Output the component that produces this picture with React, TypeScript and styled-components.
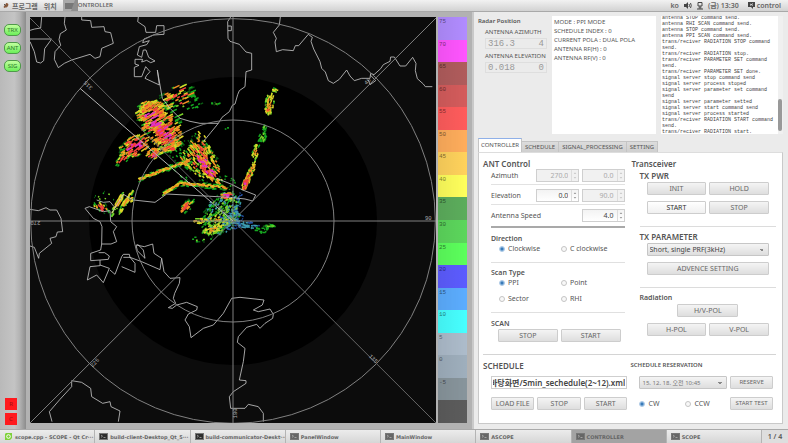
import React, { useEffect, useRef, useState } from "react";
import styled, { createGlobalStyle, css } from "styled-components";

const sans = `"Noto Sans", "Noto Sans CJK KR", sans-serif`;
const mono = `"Liberation Mono", "Noto Sans CJK KR", monospace`;

const GlobalStyle = createGlobalStyle`
  *, *::before, *::after { box-sizing: border-box; }
  body { margin: 0; background: #ebebeb; }
  body, button, input, select { font-family: ${sans}; font-size: 7px; color: #555; }
  p, h2, h3, dl, dd, fieldset { margin: 0; padding: 0; border: 0; }
`;

/* ---------- shell ---------- */

const Desktop = styled.div`
  min-height: 100vh;
  display: flex;
  flex-direction: column;
`;

const TopBar = styled.header`
  height: 12px;
  display: flex;
  align-items: center;
  gap: 6px;
  padding: 0 7px 0 3px;
  background: linear-gradient(#f2f2f2, #d2d2d2);
  border-bottom: 1px solid #a9a9a9;
  font-size: 7px;
  line-height: 11px;
  font-weight: 600;
  color: #666;
  white-space: nowrap;
`;

const MenuEntry = styled.button`
  display: flex;
  align-items: center;
  gap: 3px;
  padding: 0;
  border: 0;
  background: none;
  font-weight: 600;
  color: #666;
`;

const ActiveWindow = styled.div`
  display: flex;
  align-items: center;
  height: 11px;
  font-size: 6px;
  svg { background: #aaa; }
`;

const Tray = styled.div`
  margin-left: auto;
  display: flex;
  align-items: center;
  gap: 5px;
`;

const TrayUser = styled.span`
  display: flex;
  align-items: center;
  gap: 2px;
  margin-left: 4px;
`;

const Workspace = styled.main`
  flex: 1;
  display: grid;
  grid-template-columns: minmax(0, 472fr) minmax(0, 316fr);
`;

/* ---------- scope ---------- */

const Scope = styled.section`
  display: grid;
  grid-template-columns: 26px minmax(0, 1fr);
  background: #b2b2b2;
`;

const StatusStrip = styled.div`
  display: flex;
  flex-direction: column;
  align-items: flex-start;
  gap: 6px;
  padding: 12px 4px 4px;
  background: linear-gradient(90deg, #b9b9b9, #c4c4c4 55%, #b4b4b4 75%, #8c8c8c);
`;

const Pill = styled.button`
  width: 17px;
  height: 12px;
  padding: 0;
  border: 1px solid #4f9a4a;
  border-radius: 5px;
  background: linear-gradient(#c2ff9f, #6cf05a);
  font-size: 6px;
  line-height: 9px;
  color: #2f7a2d;
`;

const Alarms = styled.div`
  margin-top: auto;
  display: grid;
  gap: 3px;
  padding-left: 1px;
`;

const Alarm = styled.button`
  width: 12px;
  height: 12px;
  padding: 0;
  border: 0;
  background: #ff1a1e;
  font-size: 6px;
  line-height: 12px;
  color: #a01010;
`;

const ScopeView = styled.div`
  display: grid;
  grid-template-columns: minmax(0, 1fr) 29px;
  gap: 2px;
  align-items: start;
  padding: 5px 5px 6px 4px;
`;

const RadarScreen = styled.svg`
  display: block;
  width: 100%;
  background: #0c0c0c;
`;

const Scale = styled.ol`
  align-self: stretch;
  margin: 0;
  padding: 0;
  list-style: none;
  display: grid;
  grid-auto-rows: 1fr;
`;

const ScaleStep = styled.li<{ $color: string }>`
  background: linear-gradient(90deg, #0001, #fff0), ${(p) => p.$color};
  padding-left: 1px;
  font-family: ${mono};
  font-size: 6px;
  line-height: 9px;
  color: #0008;
`;

const scaleSteps: [string, string][] = [
  ["75", "#b18cff"], ["70", "#ff55ff"], ["65", "#b05c5c"], ["60", "#d45c5c"],
  ["55", "#ff5c5c"], ["50", "#ffad5c"], ["45", "#ffd25c"], ["40", "#ffff5c"],
  ["35", "#5cad5c"], ["30", "#5cd65c"], ["25", "#5cff5c"], ["20", "#5c5cff"],
  ["15", "#5cadff"], ["10", "#47ffff"], ["5", "#adbccb"], ["0", "#9fafbd"],
  ["-5", "#88959c"], ["", "#5c5c5c"],
];

/* ---------- radar echoes ---------- */

type Tone = "dark" | "green" | "blue" | "teal" | "lime" | "yellow" | "orange" | "red" | "magenta";
const toneColor: Record<Tone, string> = {
  dark: "#0a5a12", green: "#16a820", blue: "#2450a0", teal: "#3c9cb0", lime: "#7ad22a",
  yellow: "#dcd428", orange: "#f28e22", red: "#f4403c", magenta: "#e030c8",
};
const storm: Tone[] = ["dark", "green", "lime", "yellow", "orange", "yellow", "orange", "red", "red", "magenta"];
const hot: Tone[] = ["dark", "green", "yellow", "orange", "red", "red", "magenta"];
const line: Tone[] = ["green", "lime", "yellow", "yellow", "orange"];
const weak: Tone[] = ["dark", "green", "green", "lime"];
const warm: Tone[] = ["dark", "green", "yellow", "orange", "red"];
const core: Tone[] = ["dark", "green", "teal", "green", "lime", "teal", "lime"];
const cold: Tone[] = ["blue", "blue", "teal", "teal"];

/* x, y, half length, half width, axis angle, count, streak angle, streak length, ramp */
type Cell = [number, number, number, number, number, number, number, number, Tone[]];
const cells: Cell[] = [
  [455, 345, 48, 40, 50, 140, -30, 15, storm],
  [480, 375, 84, 54, 55, 230, -30, 15, storm],
  [505, 412, 50, 28, 60, 90, -30, 15, hot],
  [532, 292, 54, 38, -20, 48, -25, 20, warm],
  [550, 325, 62, 50, 0, 34, -25, 14, weak],
  [403, 440, 48, 30, -25, 120, -35, 13, hot],
  [372, 474, 32, 16, -50, 30, -50, 14, warm],
  [460, 460, 20, 16, 0, 36, -30, 12, hot],
  [497, 447, 48, 12, -18, 44, -20, 15, line],
  [602, 450, 54, 32, 80, 90, 55, 11, warm],
  [600, 485, 64, 44, 30, 140, 45, 11, storm],
  [628, 510, 52, 20, 45, 80, 45, 11, hot],
  [585, 485, 80, 62, 30, 90, 45, 8, weak],
  [560, 620, 28, 14, -50, 40, -45, 12, warm],
  [668, 640, 66, 50, -60, 240, -50, 8, core],
  [650, 660, 60, 46, -40, 60, -40, 9, weak],
  [655, 668, 34, 28, -40, 40, -40, 9, line],
  [694, 655, 36, 34, 0, 100, 30, 7, cold],
  [635, 690, 28, 14, -20, 45, -20, 9, line],
  [682, 588, 18, 12, 0, 34, 0, 11, hot],
  [600, 662, 26, 9, 0, 28, 0, 8, line],
  [612, 712, 40, 16, -20, 16, 0, 7, weak],
  [738, 673, 50, 11, 12, 60, 10, 8, cold],
  [785, 690, 20, 12, 0, 16, 0, 9, weak],
  [808, 678, 18, 6, 0, 16, 0, 9, weak],
  [822, 270, 10, 6, 0, 10, 20, 9, line],
  [808, 312, 34, 14, 95, 60, -75, 9, line],
  [804, 330, 11, 9, 90, 18, 0, 8, warm],
  [794, 385, 10, 6, 90, 12, -60, 8, weak],
  [788, 412, 18, 11, 110, 26, -60, 9, weak],
  [768, 455, 26, 11, 100, 30, -60, 9, line],
  [758, 505, 26, 8, 105, 24, -60, 8, line],
  [746, 530, 34, 9, 110, 46, -70, 9, warm],
  [736, 552, 20, 8, 110, 34, -70, 9, hot],
  [714, 612, 40, 8, 105, 22, -70, 7, cold],
  [690, 560, 48, 18, 80, 20, 80, 5, weak],
  [353, 612, 42, 7, -62, 55, -60, 10, line],
  [378, 606, 42, 7, -58, 55, -58, 10, line],
  [390, 598, 12, 8, 0, 14, 0, 8, warm],
  [306, 624, 26, 14, 20, 28, 60, 10, warm],
  [318, 592, 40, 18, 0, 12, 20, 5, weak],
  [648, 311, 16, 4, 0, 10, 0, 6, weak],
  [680, 385, 6, 3, 0, 4, 0, 5, weak],
];

const seeded = (seed: number) => () => {
  seed = (seed * 1664525 + 1013904223) % 4294967296;
  return seed / 4294967296;
};

function buildEchoes() {
  const rand = seeded(77);
  const paths = {} as Record<Tone, string>;
  const put = (tone: Tone, x: number, y: number, dx: number, dy: number) => {
    paths[tone] = (paths[tone] ?? "") +
      `M${(x - dx).toFixed(1)} ${(y - dy).toFixed(1)}l${(2 * dx).toFixed(1)} ${(2 * dy).toFixed(1)}`;
  };
  for (const [cx, cy, rl, rw, axis, count, dir, len, ramp] of cells) {
    const a = (axis * Math.PI) / 180;
    const d = (dir * Math.PI) / 180;
    for (let i = 0; i < count; i++) {
      const r = Math.pow(rand(), 0.5);
      const t = rand() * Math.PI * 2;
      const u = Math.cos(t) * r * rl;
      const v = Math.sin(t) * r * rw;
      const heat = Math.min(0.999, Math.max(0, 0.98 - r * 0.75 + (rand() - 0.5) * 0.6));
      const half = (len * (0.4 + rand() * 0.8)) / 2;
      put(ramp[Math.floor(heat * ramp.length)],
        cx + u * Math.cos(a) - v * Math.sin(a),
        cy + u * Math.sin(a) + v * Math.cos(a),
        Math.cos(d) * half, Math.sin(d) * half);
    }
  }
  const bands: [number, number, number, number][] = [
    [418, 538, 500, 506], [500, 506, 575, 480],
    [490, 582, 540, 550], [540, 550, 590, 553], [590, 553, 680, 564],
  ];
  for (const [x1, y1, x2, y2] of bands) {
    const length = Math.hypot(x2 - x1, y2 - y1);
    const n = Math.round(length * 0.7);
    for (let i = 0; i < n; i++) {
      const k = i / n;
      const off = (rand() + rand() - 1) * 9;
      const tone = Math.abs(off) > 4 ? "green" : (["yellow", "lime", "yellow", "orange"] as Tone[])[Math.floor(rand() * 4)];
      put(tone, x1 + (x2 - x1) * k, y1 + (y2 - y1) * k + off, ((x2 - x1) / length) * 4, ((y2 - y1) / length) * 4);
    }
  }
  return paths;
}
const echoes = buildEchoes();
const toneOrder = Object.keys(toneColor) as Tone[];

function Radar() {
  return (
    <RadarScreen viewBox="90 51 1218 1218" role="img" aria-label="PPI radar display">
      <circle cx="699" cy="663" r="432" fill="#000" />
      <g fill="none" strokeWidth="4.5">
        {toneOrder.map((tone) => (
          <path key={tone} d={echoes[tone]} stroke={toneColor[tone]} />
        ))}
      </g>
      <g fill="none" stroke="#c4c4c4" strokeWidth="2.5" strokeLinejoin="round">
        <path d="M125 51L122 84L104 87L90 91M90 117H155L134 146L131 182L122 189L110 186L103 155L90 125" />
        <path d="M195 51L193 70L199 90L181 101L177 119L182 136L165 155L163 178L175 203L193 190L215 180L270 163L285 175L300 170L305 145L340 130L332 98L315 95L312 80L275 82L272 62L245 60V51" />
        <path d="M415 51L413 65L435 80L438 97H467L470 77H492V103L460 105L432 117L428 128L448 122L440 134L418 140L412 165L425 172L430 150L438 150L446 172L465 183L452 188L440 181L425 186L428 178H405V192L417 196L403 202V230H425L437 200L450 215L440 226L435 235L478 255L472 210L487 295L510 325L540 355L570 364L600 370L655 370L632 398L610 425M655 370L666 352L688 335L697 316L705 312L713 284L718 272L735 260L738 215L755 210V160L738 156L718 133L690 124L684 115L683 65L692 51M684 78h10v14h-10" />
        <path d="M841 51L838 75L820 97L829 115L825 126L829 155L848 149L880 152L886 137L896 137L925 103L937 112L933 124L941 147L960 185L965 205L976 216L985 242L1000 250L1018 238L1040 210L1050 228L1063 242L1085 235L1110 235L1112 220L1122 224L1142 206L1150 194L1170 184L1172 171H1183L1200 198H1217L1238 172L1248 190L1246 212L1252 236L1270 252L1276 260H1297M1105 240L1110 254L1127 242L1112 226" />
        <path d="M90 628L115 632L138 623L150 630L170 630L183 655L188 695L172 696L168 710L150 715L155 730L118 760L116 775L103 742L90 738" />
        <path d="M255 625L268 620L285 626L310 635L330 632L332 665L350 680L340 695L350 725L333 732L305 732L306 680L300 665L280 655L255 625M305 732L302 750L272 760V782L300 780L325 778L328 768L314 758L296 758M300 780V797L270 800L262 840L290 825L310 848L328 805L300 795M330 810L345 823L365 770L370 763H388L390 772H370M365 800L405 817V790L390 772L425 785L480 809L485 775L462 760L458 732L433 740L408 735L412 752L435 775L430 750L412 732M485 775L492 815L510 835L540 833L538 850L524 880L520 895L527 910L505 923L517 925L530 915L560 907L592 920L590 930L565 942L555 960L568 980L573 1013L610 985L640 975L670 940L695 895L720 892L792 900L787 915L760 930L775 935L810 927L820 943L818 955L795 970L780 985L770 973L740 982L715 1010L712 1027L735 1045L730 1085L718 1140L738 1142V1150L700 1175L688 1190L692 1225H735L745 1213L775 1220L790 1240V1265" />
        <path d="M290 600L310 607L330 605L342 620M335 640L370 583L400 600L465 607L500 582L690 592L735 597L758 603L767 585L728 570L695 553L650 535" />
        <path d="M156 1265L148 1235L180 1198L215 1160V1142L245 1147L272 1165L275 1190L308 1210L330 1205L333 1220L360 1233L355 1265" />
      </g>
      <g fill="none" stroke="#808080" strokeWidth="3">
        <circle cx="699" cy="663" r="607" />
        <circle cx="699" cy="663" r="303" />
        <path d="M699 51V1269M90 663H1308M90 1269L1308 54" />
        <path d="M90 54L1308 1269" stroke="#666" />
      </g>
      <path d="M240 265L699 663" stroke="#b4b4b4" strokeWidth="3" />
      <g fill="#aaa" fontFamily="Liberation Mono, monospace" fontSize="17" textAnchor="middle">
        <text x="1285" y="660">90</text>
        <text transform="translate(106 664) rotate(180)">270</text>
        <text transform="translate(268 252) rotate(-135)">315</text>
        <text transform="translate(1106 248) rotate(-45)">45</text>
        <text transform="translate(1116 1080) rotate(45)">135</text>
        <text transform="translate(288 1092) rotate(-45)">225</text>
        <text transform="translate(712 1240) rotate(-90)">180</text>
      </g>
    </RadarScreen>
  );
}

/* ---------- control window ---------- */

const Panel = styled.section`
  display: flex;
  flex-direction: column;
  padding: 4px 5px 5px 4px;
  background: #ebebeb;
  border-left: 2px solid #c9c9c9;
  min-width: 0;
`;

const Overview = styled.div`
  display: grid;
  grid-template-columns: minmax(0, 69fr) minmax(0, 104fr) minmax(0, 122fr);
  gap: 5px;
  height: 118px;
`;

const Position = styled.div`
  display: flex;
  flex-direction: column;
  line-height: 10px;
`;

const Readout = styled.div`
  padding-left: 7px;
  margin-bottom: 2px;
  font-size: 6px;
  white-space: nowrap;
  line-height: 11px;
`;

const Lcd = styled.output`
  display: flex;
  justify-content: space-between;
  height: 11px;
  padding: 0 2px;
  border: 1px solid #dedede;
  font-family: ${mono};
  font-size: 9px;
  line-height: 10px;
  color: #999;
`;

const StatusBox = styled.div`
  padding: 2px;
  background: #fff;
  font-size: 6px;
  line-height: 9px;
  white-space: nowrap;
  overflow: hidden;
`;

const LogBox = styled.div`
  display: grid;
  grid-template-columns: minmax(0, 1fr) 5px;
  background: #fff;
  overflow: hidden;
`;

const LogText = styled.div`
  display: flex;
  flex-direction: column;
  justify-content: center;
  height: 118px;
  padding-left: 1px;
  font-family: ${mono};
  font-size: 5px;
  line-height: 6px;
  color: #444;
`;

const ScrollTrack = styled.div`
  display: flex;
  flex-direction: column;
  justify-content: flex-end;
  padding: 0 1px 3px 0;
  background: #f0f0f0;
  &::after { content: ""; height: 32px; border-radius: 2px; background: #999; }
`;

const Tabs = styled.div`
  display: flex;
  align-items: flex-end;
  height: 15px;
  margin-top: 3px;
`;

const Tab = styled.button<{ $active: boolean }>`
  height: 11px;
  padding: 0 3px;
  border: 1px solid #c4c4c4;
  border-left-width: 0;
  border-bottom: 0;
  background: linear-gradient(#dcdcdc, #cfcfcf);
  font-size: 6px;
  line-height: 10px;
  white-space: nowrap;
  ${(p) => p.$active && css`
    height: 14px;
    padding: 0 2px;
    border-left-width: 1px;
    border-top: 1px solid #8fb0e8;
    background: #fff;
    line-height: 13px;
  `}
`;

const TabPage = styled.div`
  flex: 1;
  padding: 5px 6px 10px 4px;
  background: #fff;
  border: 1px solid #c9c9c9;
  border-top-color: #ddd;
`;

const Columns = styled.div`
  display: grid;
  grid-template-columns: minmax(0, 1fr) minmax(0, 1fr);
  gap: 4px;
`;

const LowerColumns = styled(Columns)`
  gap: 0;
  grid-template-columns: minmax(0, 148fr) minmax(0, 146fr);
`;

const LowerBlock = styled.section`
  border-top: 1px solid #d4d4d4;
  padding-top: 5px;
`;

const Title = styled.h2<{ $small?: boolean; $medium?: boolean }>`
  height: 11px;
  font-size: ${(p) => (p.$small ? 6 : p.$medium ? 7 : 8)}px;
  line-height: 11px;
  font-weight: 600;
  color: #555;
  white-space: nowrap;
`;

const Indent = styled.div`
  padding: 0 3px 0 8px;
`;

const Block = styled.section<{ $ruled?: boolean }>`
  padding-top: ${(p) => (p.$ruled ? 4 : 1)}px;
  padding-bottom: 12px;
  ${(p) => p.$ruled && css`border-top: 1px solid #dcdcdc;`}
`;

const ScanBlock = styled(Block)`
  padding-top: 5px;
`;

const Fields = styled.div`
  padding-bottom: 1px;
`;

const Field = styled.div`
  display: grid;
  grid-template-columns: minmax(0, 42fr) minmax(0, 43fr) minmax(0, 42fr);
  gap: 3px;
  padding-bottom: 2px;
  margin-bottom: 4px;
  border-bottom: 1px solid #e2e2e2;
  line-height: 13px;
  white-space: nowrap;
  &:last-child { margin-bottom: 0; padding-bottom: 4px; border-bottom: 2px solid #a9a9a9; }
`;

const SpinFrame = styled.span<{ $off?: boolean }>`
  display: flex;
  align-items: center;
  height: 13px;
  border: 1px solid #cfcfcf;
  background: ${(p) => (p.$off ? "#f1f1f1" : "linear-gradient(#f3f3f3, #fff)")};
  &:last-child { grid-column: 3; }
  svg { flex: none; border-left: 1px solid #ddd; }
`;

const SpinInput = styled.input`
  flex: 1;
  min-width: 0;
  width: 0;
  height: 11px;
  padding: 0 3px 0 0;
  border: 0;
  background: none;
  text-align: right;
  color: #444;
  appearance: textfield;
  &::-webkit-inner-spin-button { appearance: none; margin: 0; }
  &:disabled { color: #aaa; }
`;

function Spin({ label, value, disabled }: { label: string; value: string; disabled?: boolean }) {
  return (
    <SpinFrame $off={disabled}>
      <SpinInput type="number" step="0.1" aria-label={label} defaultValue={value} disabled={disabled} />
      <svg width="7" height="11" viewBox="0 0 7 11" fill={disabled ? "#bbb" : "#777"} aria-hidden="true">
        <path d="M2 3.5L3.5 2L5 3.5ZM2 7.5L3.5 9L5 7.5Z" />
      </svg>
    </SpinFrame>
  );
}

const Group = styled.fieldset`
  padding-top: 4px;
  padding-bottom: 8px;
  border-bottom: 1px solid #e0e0e0;
`;

const Choices = styled.div<{ $compact?: boolean }>`
  display: grid;
  grid-template-columns: ${(p) => (p.$compact ? "46px 1fr" : "62px 1fr")};
  row-gap: 6px;
  padding-left: ${(p) => (p.$compact ? 0 : 8)}px;
`;

const Choice = styled.label`
  display: flex;
  align-items: center;
  gap: 3px;
  height: 10px;
  line-height: 10px;
  white-space: nowrap;
`;

const Radio = styled.input`
  appearance: none;
  flex: none;
  width: 6px;
  height: 6px;
  margin: 0;
  border: 1px solid #c4c4c4;
  border-radius: 50%;
  background: #f8f8f8;
  &:checked { border-color: #a8c6e4; background: radial-gradient(#3a7ab8 25%, #8ab8e2 75%); }
`;

function RadioSet({ name, options, compact }: { name: string; options: string[]; compact?: boolean }) {
  const [picked, setPicked] = useState(options[0]);
  return (
    <Choices $compact={compact}>
      {options.map((option) => (
        <Choice key={option}>
          <Radio type="radio" name={name} checked={picked === option} onChange={() => setPicked(option)} />
          {option}
        </Choice>
      ))}
    </Choices>
  );
}

const PushButton = styled.button<{ $default?: boolean }>`
  width: 100%;
  height: 13px;
  padding: 0;
  border: 1px solid #cdcdcd;
  border-radius: 1px;
  background: ${(p) => (p.$default ? "linear-gradient(#fff, #f0f0f0)" : "linear-gradient(#f4f4f4, #dedede)")};
  color: ${(p) => (p.$default ? "#333" : "#666")};
  line-height: 11px;
  white-space: nowrap;
`;

const SmallButton = styled(PushButton)`
  font-size: 6px;
`;

const ButtonGrid = styled.div<{ $columns: number }>`
  display: grid;
  grid-template-columns: repeat(${(p) => p.$columns}, minmax(0, 1fr));
  gap: 6px 3px;
`;

const ScanButtons = styled.div`
  padding: 0 4px 0 7px;
`;

const TxArea = styled.div`
  padding: 0 7px 0 7px;
  margin-top: 1px;
`;

const TxGroup = styled.div`
  padding-left: 8px;
`;

const WideButton = styled.div`
  grid-column: 1 / -1;
  justify-self: center;
  width: 50%;
`;

const PulseSelect = styled.select`
  grid-column: 1 / -1;
  height: 13px;
  padding: 0 12px 0 2px;
  border: 1px solid #c6c6c6;
  border-radius: 1px;
  appearance: none;
  background:
    linear-gradient(45deg, #0000 50%, #888 50%) right 6px center / 2px 2px no-repeat,
    linear-gradient(-45deg, #0000 50%, #888 50%) right 4px center / 2px 2px no-repeat,
    linear-gradient(#f4f4f4, #dedede);
  color: #444;
`;

const DateSelect = styled(PulseSelect)`
  grid-column: auto;
  width: 100%;
  min-width: 0;
  font-size: 6px;
  color: #777;
`;

const FullRow = styled.div`
  grid-column: 1 / -1;
`;

const PathInput = styled.input`
  display: block;
  width: 100%;
  height: 13px;
  margin: 5px 0 8px;
  padding: 0 1px;
  border: 1px solid #cfcfcf;
  background: #fff;
  font-weight: 600;
  font-size: 8px;
  color: #444;
`;

function SchedulePath() {
  const field = useRef<HTMLInputElement>(null);
  useEffect(() => {
    if (field.current) field.current.scrollLeft = field.current.scrollWidth;
  }, []);
  return <PathInput ref={field} aria-label="Schedule file" defaultValue="바탕화면/5min_sechedule(2~12).xml" />;
}

const Reservation = styled.div`
  display: grid;
  grid-template-columns: minmax(0, 88fr) minmax(0, 43fr);
  gap: 8px 3px;
  align-items: center;
  padding: 5px 3px 0 9px;
`;

/* ---------- taskbar ---------- */

const Taskbar = styled.footer`
  display: grid;
  grid-template-columns: repeat(8, minmax(0, 1fr)) 26px;
  height: 14px;
  background: #dedede;
  border-top: 1px solid #aaa;
`;

const Task = styled.button<{ $active?: boolean }>`
  display: flex;
  align-items: center;
  gap: 2px;
  padding: 0 3px 0 4px;
  border: 0;
  border-right: 1px solid #b4b4b4;
  background: ${(p) => (p.$active ? "#a3a3a3" : "linear-gradient(#ececec, #d6d6d6)")};
  font-family: "DejaVu Sans", "Noto Sans CJK KR", sans-serif;
  font-size: 5px;
  font-weight: 600;
  color: #666;
  white-space: nowrap;
  overflow: hidden;
  svg { flex: none; }
`;

const Pager = styled.span`
  font-size: 7px;
  line-height: 13px;
  text-align: center;
  font-weight: 600;
`;

function WindowIcon({ kind }: { kind: string }) {
  if (kind === "qt")
    return (
      <svg width="9" height="9" viewBox="0 0 9 9" aria-hidden="true">
        <path d="M2 1H8V6L6 8H1V2Z" fill="#7fd13b" />
        <circle cx="4.5" cy="4.5" r="1.8" fill="none" stroke="#fff" />
      </svg>
    );
  return (
    <svg width="9" height="7" viewBox="0 0 9 7" aria-hidden="true">
      <rect x="0.5" y="0.5" width="8" height="6" fill={kind === "term" ? "#2d2d2d" : "#666"} stroke="#777" />
      <path d="M2 2L3.5 3.2L2 4.4M4.5 4.5H6.5" fill="none" stroke="#bbb" strokeWidth="0.7" />
    </svg>
  );
}

const tasks: [string, string][] = [
  ["qt", "scope.cpp - SCOPE - Qt Cr···"], ["term", "build-client-Desktop_Qt_5···"],
  ["term", "build-communicator-Deskt···"], ["app", "PanelWindow"], ["app", "MainWindow"],
  ["app", "ASCOPE"], ["app", "CONTROLLER"], ["app", "SCOPE"],
];

const log = [
  "antenna STOP command send.", "antenna RHI SCAN command send.", "antenna STOP command send.",
  "antenna PPI SCAN command send.", "trans/reciver RADIATION STOP command send.",
  "trans/reciver RADIATION stop.", "trans/reciver PARAMETER SET command send.",
  "trans/reciver PARAMETER SET done.", "signal server stop command send",
  "signal server process stoped", "signal server parameter set command send",
  "signal server parameter setted", "signal server start command send",
  "signal server process started", "trans/reciver RADIATION START command send.",
  "trans/reciver RADIATION start.",
];

const tabNames = ["CONTROLLER", "SCHEDULE", "SIGNAL_PROCESSING", "SETTING"];

export default function App() {
  return (
    <Desktop>
      <GlobalStyle />
      <TopBar>
        <MenuEntry>
          <svg width="6" height="7" viewBox="0 0 6 7" aria-hidden="true">
            <path d="M1 6C0 3 3 3 3 1C5 1 6 2 5 4C4 6 3 5 1 6Z" fill="#8a5a3c" />
            <path d="M1 2L3 4" stroke="#555" />
          </svg>
          프로그램
        </MenuEntry>
        <MenuEntry>위치</MenuEntry>
        <ActiveWindow>
          <svg width="15" height="11" viewBox="0 0 15 11" aria-hidden="true">
            <rect x="2" y="3" width="9" height="6" fill="#777" />
            <path d="M8 11L12 0H15V11Z" fill="#8e8e8e" />
          </svg>
          ONTROLLER
        </ActiveWindow>
        <Tray>
          <span>ko</span>
          <svg width="8" height="7" viewBox="0 0 8 7" aria-label="Volume">
            <path d="M0 2H2L4 0V7L2 5H0Z" fill="#444" />
            <path d="M5 2Q6 3.5 5 5M6.5 1Q8 3.5 6.5 6" fill="none" stroke="#444" />
          </svg>
          <svg width="6" height="8" viewBox="0 0 6 8" aria-label="Network">
            <path d="M1 0.5H5V4H1ZM3 4V6M0 7H6M1.5 6H4.5" fill="none" stroke="#444" />
          </svg>
          <span>(금) 13:30</span>
          <TrayUser>
            <svg width="7" height="7" viewBox="0 0 7 7" aria-hidden="true">
              <path d="M0 0H7V5H5V7L3 5H0Z" fill="#444" />
              <path d="M2 2L5 3.5M5 1.5L2 3.5" stroke="#ddd" strokeWidth="0.8" />
            </svg>
            control
          </TrayUser>
        </Tray>
      </TopBar>

      <Workspace>
        <Scope>
          <StatusStrip>
            <Pill>TRX</Pill>
            <Pill>ANT</Pill>
            <Pill>SIG</Pill>
            <Alarms>
              <Alarm>R</Alarm>
              <Alarm>C</Alarm>
            </Alarms>
          </StatusStrip>
          <ScopeView>
            <Radar />
            <Scale>
              {scaleSteps.map(([text, color]) => (
                <ScaleStep key={color} $color={color}>{text}</ScaleStep>
              ))}
            </Scale>
          </ScopeView>
        </Scope>

        <Panel>
          <Overview>
            <Position>
              <Title $small>Radar Position</Title>
              <Readout>ANTENNA AZIMUTH<Lcd><span>316.3</span><span>4</span></Lcd></Readout>
              <Readout>ANTENNA ELEVATION<Lcd><span>0.018</span><span>0</span></Lcd></Readout>
            </Position>
            <StatusBox>
              <p>MODE : PPI MODE</p>
              <p>SCHEDULE INDEX : 0</p>
              <p>CURRENT POLA : DUAL POLA</p>
              <p>ANTENNA RF(H) : 0</p>
              <p>ANTENNA RF(V) : 0</p>
            </StatusBox>
            <LogBox role="log">
              <LogText>{log.map((entry, i) => <p key={i}>{entry}</p>)}</LogText>
              <ScrollTrack />
            </LogBox>
          </Overview>

          <Tabs role="tablist">
            {tabNames.map((name, i) => (
              <Tab key={name} role="tab" aria-selected={i === 0} $active={i === 0}>{name}</Tab>
            ))}
          </Tabs>

          <TabPage role="tabpanel">
            <Columns>
              <div>
                <Title>ANT Control</Title>
                <Indent>
                  <Fields>
                    <Field>
                      <span>Azimuth</span>
                      <Spin label="Azimuth start" value="270.0" disabled />
                      <Spin label="Azimuth end" value="0.0" disabled />
                    </Field>
                    <Field>
                      <span>Elevation</span>
                      <Spin label="Elevation start" value="0.0" />
                      <Spin label="Elevation end" value="90.0" disabled />
                    </Field>
                    <Field>
                      <span>Antenna Speed</span>
                      <Spin label="Antenna speed" value="4.0" />
                    </Field>
                  </Fields>
                  <Group aria-label="Direction">
                    <Title $medium>Direction</Title>
                    <RadioSet name="direction" options={["Clockwise", "C clockwise"]} />
                  </Group>
                  <Group aria-label="Scan Type">
                    <Title $medium>Scan Type</Title>
                    <RadioSet name="scan" options={["PPI", "Point", "Sector", "RHI"]} />
                  </Group>
                  <ScanBlock>
                    <Title $medium>SCAN</Title>
                    <ScanButtons>
                      <ButtonGrid $columns={2}>
                        <PushButton>STOP</PushButton>
                        <PushButton>START</PushButton>
                      </ButtonGrid>
                    </ScanButtons>
                  </ScanBlock>
                </Indent>
              </div>

              <div>
                <Title>Transceiver</Title>
                <TxGroup>
                  <Block>
                    <Title>TX PWR</Title>
                    <TxArea>
                      <ButtonGrid $columns={2}>
                        <PushButton>INIT</PushButton>
                        <PushButton>HOLD</PushButton>
                        <PushButton $default>START</PushButton>
                        <PushButton>STOP</PushButton>
                      </ButtonGrid>
                    </TxArea>
                  </Block>
                  <Block $ruled>
                    <Title>TX PARAMETER</Title>
                    <TxArea>
                      <ButtonGrid $columns={2}>
                        <PulseSelect aria-label="TX parameter">
                          <option>Short, single PRF(3kHz)</option>
                        </PulseSelect>
                        <FullRow><PushButton>ADVENCE SETTING</PushButton></FullRow>
                      </ButtonGrid>
                    </TxArea>
                  </Block>
                  <Block $ruled>
                    <Title $medium>Radiation</Title>
                    <TxArea>
                      <ButtonGrid $columns={2}>
                        <WideButton><PushButton>H/V-POL</PushButton></WideButton>
                        <PushButton>H-POL</PushButton>
                        <PushButton>V-POL</PushButton>
                      </ButtonGrid>
                    </TxArea>
                  </Block>
                </TxGroup>
              </div>
            </Columns>

            <LowerColumns>
              <LowerBlock>
                <Title>SCHEDULE</Title>
                <Indent>
                  <SchedulePath />
                  <ButtonGrid $columns={3}>
                    <PushButton>LOAD FILE</PushButton>
                    <PushButton>STOP</PushButton>
                    <PushButton>START</PushButton>
                  </ButtonGrid>
                </Indent>
              </LowerBlock>
              <LowerBlock>
                <Title $small>SCHEDULE RESERVATION</Title>
                <Reservation>
                  <DateSelect aria-label="Reservation time">
                    <option>15. 12. 18. 오전 10:45</option>
                  </DateSelect>
                  <SmallButton>RESERVE</SmallButton>
                  <RadioSet name="rotation" options={["CW", "CCW"]} compact />
                  <SmallButton>START TEST</SmallButton>
                </Reservation>
              </LowerBlock>
            </LowerColumns>
          </TabPage>
        </Panel>
      </Workspace>

      <Taskbar>
        {tasks.map(([kind, name]) => (
          <Task key={name} $active={name === "CONTROLLER"}>
            <WindowIcon kind={kind} />
            {name}
          </Task>
        ))}
        <Pager>1 / 4</Pager>
      </Taskbar>
    </Desktop>
  );
}
